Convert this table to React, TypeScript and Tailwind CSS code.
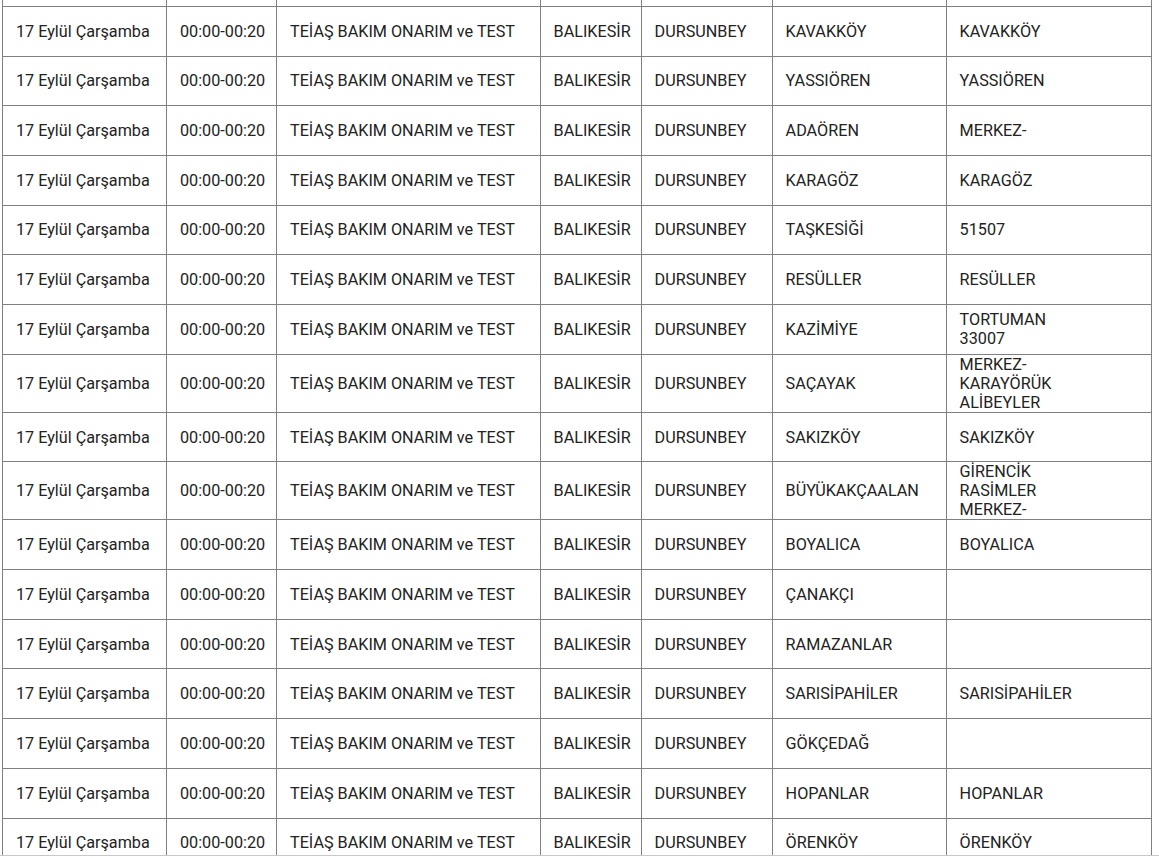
import React from 'react';

interface Row {
  il: string;
  ilce: string;
  mahalle: string;
  sokak: string;
}

const rows: Row[] = [
  { il: 'BALIKESİR', ilce: 'DURSUNBEY', mahalle: 'KAVAKKÖY', sokak: 'KAVAKKÖY' },
  { il: 'BALIKESİR', ilce: 'DURSUNBEY', mahalle: 'YASSIÖREN', sokak: 'YASSIÖREN' },
  { il: 'BALIKESİR', ilce: 'DURSUNBEY', mahalle: 'ADAÖREN', sokak: 'MERKEZ-' },
  { il: 'BALIKESİR', ilce: 'DURSUNBEY', mahalle: 'KARAGÖZ', sokak: 'KARAGÖZ' },
  { il: 'BALIKESİR', ilce: 'DURSUNBEY', mahalle: 'TAŞKESİĞİ', sokak: '51507' },
  { il: 'BALIKESİR', ilce: 'DURSUNBEY', mahalle: 'RESÜLLER', sokak: 'RESÜLLER' },
  { il: 'BALIKESİR', ilce: 'DURSUNBEY', mahalle: 'KAZİMİYE', sokak: 'TORTUMAN\n33007' },
  { il: 'BALIKESİR', ilce: 'DURSUNBEY', mahalle: 'SAÇAYAK', sokak: 'MERKEZ-\nKARAYÖRÜK\nALİBEYLER' },
  { il: 'BALIKESİR', ilce: 'DURSUNBEY', mahalle: 'SAKIZKÖY', sokak: 'SAKIZKÖY' },
  { il: 'BALIKESİR', ilce: 'DURSUNBEY', mahalle: 'BÜYÜKAKÇAALAN', sokak: 'GİRENCİK\nRASİMLER\nMERKEZ-' },
  { il: 'BALIKESİR', ilce: 'DURSUNBEY', mahalle: 'BOYALICA', sokak: 'BOYALICA' },
  { il: 'BALIKESİR', ilce: 'DURSUNBEY', mahalle: 'ÇANAKÇI', sokak: '' },
  { il: 'BALIKESİR', ilce: 'DURSUNBEY', mahalle: 'RAMAZANLAR', sokak: '' },
  { il: 'BALIKESİR', ilce: 'DURSUNBEY', mahalle: 'SARISİPAHİLER', sokak: 'SARISİPAHİLER' },
  { il: 'BALIKESİR', ilce: 'DURSUNBEY', mahalle: 'GÖKÇEDAĞ', sokak: '' },
  { il: 'BALIKESİR', ilce: 'DURSUNBEY', mahalle: 'HOPANLAR', sokak: 'HOPANLAR' },
  { il: 'BALIKESİR', ilce: 'DURSUNBEY', mahalle: 'ÖRENKÖY', sokak: 'ÖRENKÖY' },
];

const cell = 'border border-[#808080] pl-[13px] pr-[8px] py-0 h-[49.7px] align-middle whitespace-nowrap';

const App: React.FC = () => {
  return (
    <div className="h-[857px] overflow-hidden bg-white">
      <div className="h-[856px] overflow-hidden border-b border-[#c8c8c8]">
        <table
          className="-mt-[43.8px] ml-[2px] w-[1149px] table-fixed border-collapse border-l border-l-[#333] text-[16.2px] leading-[19px] text-[#222]"
          style={{ fontFamily: 'Roboto, "Noto Sans", sans-serif' }}
        >
          <colgroup>
            <col className="w-[164px]" />
            <col className="w-[110px]" />
            <col className="w-[263.6px]" />
            <col className="w-[101px]" />
            <col className="w-[131px]" />
            <col className="w-[174px]" />
            <col className="w-[205.4px]" />
          </colgroup>
          <tbody>
            {/* row scrolled above the view, only its lower edge shows */}
            <tr>
              {Array.from({ length: 7 }).map((_, i) => (
                <td key={i} className={cell} />
              ))}
            </tr>
            {rows.map((r, i) => (
              <tr key={i}>
                <td className={cell}>17 Eylül Çarşamba</td>
                <td className={cell}>00:00-00:20</td>
                <td className={cell}>TEİAŞ BAKIM ONARIM ve TEST</td>
                <td className={cell}>{r.il}</td>
                <td className={cell}>{r.ilce}</td>
                <td className={cell}>{r.mahalle}</td>
                <td className={`${cell} whitespace-pre-line`}>{r.sokak}</td>
              </tr>
            ))}
          </tbody>
        </table>
      </div>
    </div>
  );
};

export default App;
